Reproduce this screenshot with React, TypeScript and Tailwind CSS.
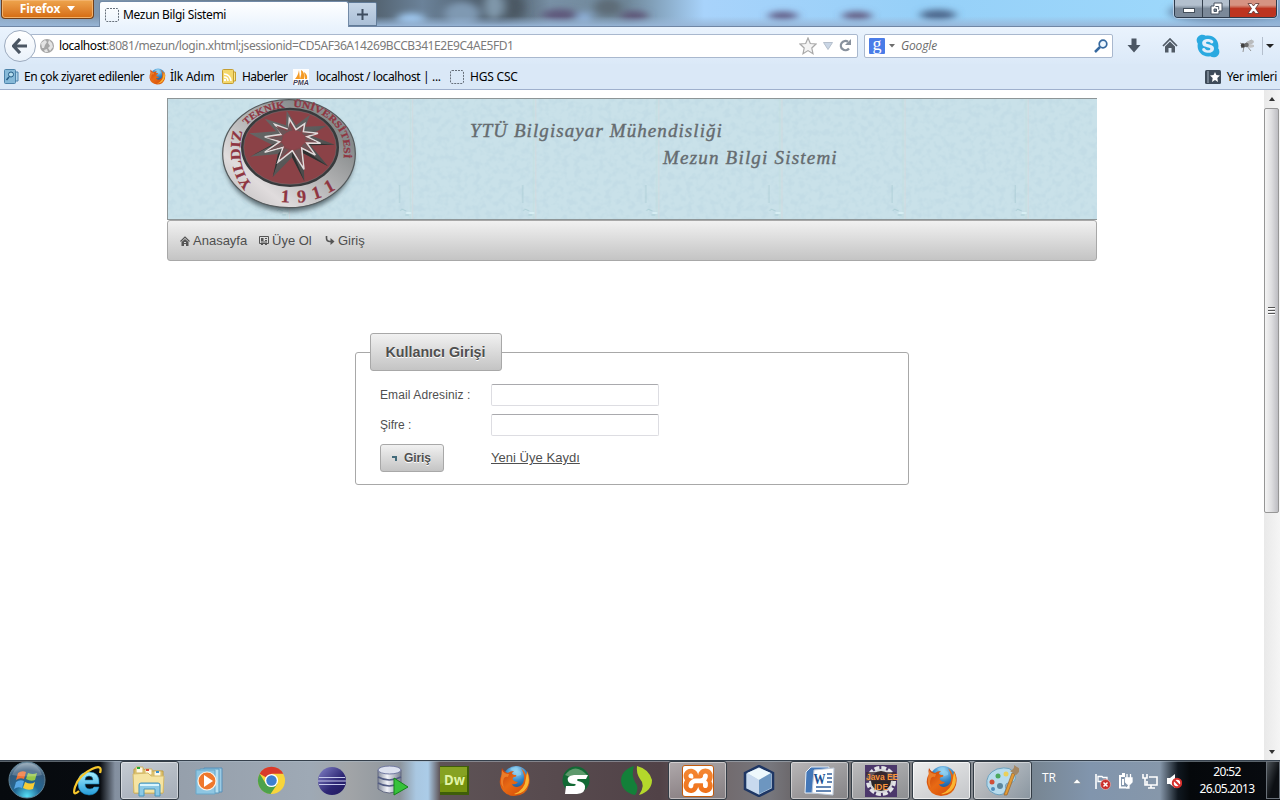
import React from "react";
import { FaSkype } from "react-icons/fa";
import { SiXampp } from "react-icons/si";

const ui = "font-['Noto_Sans','Open_Sans',sans-serif]";

function Firefox({ size, id }: { size: number; id: string }) {
  return (
    <svg width={size} height={size} viewBox="0 0 32 32" className="shrink-0">
      <defs>
        <radialGradient id={id + "b"} cx=".5" cy=".2" r=".8">
          <stop offset="0" stopColor="#a6dcf8" />
          <stop offset=".5" stopColor="#2f83c5" />
          <stop offset="1" stopColor="#123a7c" />
        </radialGradient>
        <linearGradient id={id + "o"} x1="0" y1="0" x2="1" y2="1">
          <stop offset="0" stopColor="#c03a0b" />
          <stop offset=".45" stopColor="#e86a14" />
          <stop offset=".8" stopColor="#d9520a" />
          <stop offset="1" stopColor="#ffc02e" />
        </linearGradient>
      </defs>
      <circle cx="17" cy="14" r="13" fill={`url(#${id}b)`} />
      <path d="M11 4q4-3 9-1q-3 1-1 3q4 0 3 4l-4 1-2-4z" fill="#8fd0f0" opacity=".7" />
      <path
        d="M3 3Q2 6 3 9Q0 14 1 19Q3 30 15 31Q27 31 30 20Q32 12 28 6Q28 9 27 10Q25 5 22 3Q26 10 25 15Q24 21 18 22Q14 22 13 19Q17 20 19 17Q16 17 14 15Q13 13 15 12Q18 12 17 10Q13 10 13 8L15 6Q11 6 9 8Q5 7 3 3Z"
        fill={`url(#${id}o)`}
      />
      <path d="M28 7Q33 18 25 26Q20 30 15 29Q26 25 27 13Z" fill="#ffc63a" opacity=".85" />
      <path d="M3 5Q5 9 10 9L9 12Q7 11 5 13Q3 18 5 23Q1 19 2 14Z" fill="#f48b31" opacity=".75" />
    </svg>
  );
}

function BlankPage() {
  return (
    <svg width="14" height="14" viewBox="0 0 14 14" className="shrink-0">
      <rect x=".5" y=".5" width="13" height="13" rx="1.5" fill="none" stroke="#67707b" strokeDasharray="2 1" />
    </svg>
  );
}

function TitleBar() {
  return (
    <div className="relative flex h-[27px] shrink-0 items-start overflow-hidden bg-[#9ed2f8]">
      <svg className="absolute inset-0" width="1280" height="27">
        <defs>
          <linearGradient id="sky">
            <stop offset="0" stopColor="#8fa9c4" />
            <stop offset=".29" stopColor="#52616e" />
            <stop offset=".33" stopColor="#6b8299" />
            <stop offset=".39" stopColor="#46535f" />
            <stop offset=".43" stopColor="#7890a5" />
            <stop offset=".49" stopColor="#6f8799" />
            <stop offset=".55" stopColor="#a8d3fb" />
            <stop offset=".72" stopColor="#96d0f8" />
            <stop offset=".93" stopColor="#9dd8fb" />
            <stop offset="1" stopColor="#83a9cf" />
          </linearGradient>
          <linearGradient id="haze" x2="0" y2="1">
            <stop offset=".6" stopColor="#9ab9da" stopOpacity="0" />
            <stop offset=".98" stopColor="#98b6d8" />
          </linearGradient>
          <filter id="soft" x="-50%" y="-100%" width="200%" height="300%">
            <feGaussianBlur stdDeviation="5 3" />
          </filter>
        </defs>
        <rect width="1280" height="27" fill="url(#sky)" />
        <g filter="url(#soft)">
          <ellipse cx="411" cy="19" rx="14" ry="6" fill="#9dc6ee" />
          <ellipse cx="462" cy="14" rx="18" ry="12" fill="#7f99b2" />
          <ellipse cx="494" cy="6" rx="10" ry="14" fill="#8098ab" />
          <ellipse cx="514" cy="7" rx="10" ry="12" fill="#4b5863" />
          <ellipse cx="560" cy="15" rx="18" ry="6" fill="#5f587b" />
          <ellipse cx="584" cy="18" rx="8" ry="6" fill="#8eb0d8" />
          <ellipse cx="608" cy="7" rx="14" ry="9" fill="#5d6c77" />
          <ellipse cx="634" cy="16" rx="14" ry="5" fill="#5f5678" />
          <ellipse cx="783" cy="16" rx="15" ry="4.500" fill="#625d86" />
          <ellipse cx="857" cy="16" rx="15" ry="4.500" fill="#635c81" />
          <ellipse cx="938" cy="15" rx="18" ry="5.500" fill="#4d678c" />
          <ellipse cx="1224" cy="12" rx="55" ry="13" fill="#6b8bad" />
        </g>
        <rect width="1280" height="27" fill="url(#haze)" />
        <path d="M0 26.5H1280" stroke="#6f86a5" />
      </svg>
      <div className="relative ml-[1px] flex h-[19px] w-[93px] items-start justify-center gap-[7px] rounded-b-[4px] border border-t-0 border-[#71401c] bg-gradient-to-b from-[#eea54d] to-[#d56b0d] text-[12px] font-bold leading-[17px] text-white shadow-[inset_0_0_0_1px_#f3b36c]">
        <span className="font-['Open_Sans'] text-[12px] tracking-[-0.2px]">Firefox</span>
        <svg width="8" height="5" className="mt-[6px]"><path d="M0 0H8L4 5Z" fill="#fff" /></svg>
      </div>
      <div className="relative ml-[5px] mt-[1px] flex h-[26px] w-[250px] items-center gap-[4px] rounded-t-[3px] border border-b-0 border-[#728aa7] bg-gradient-to-b from-white to-[#eaf3fd] pl-[5px]">
        <BlankPage />
        <span className="text-[12px] tracking-[-0.34px]">Mezun Bilgi Sistemi</span>
      </div>
      <div className="relative mt-[2px] flex h-[24px] w-[28px] items-center justify-center rounded-tr-[2px] border border-l-0 border-[#617b98] bg-gradient-to-b from-[#c6d5e6] to-[#aabfd7]">
        <svg width="11" height="11" viewBox="0 0 11 11"><path d="M5.5 0V11M0 5.5H11" stroke="#3e4d60" strokeWidth="2" /></svg>
      </div>
      <div className="relative ml-auto mr-[3px] flex h-[18px] w-[103px] overflow-hidden rounded-b-[4px] border border-t-0 border-[#2d3b4c] shadow-[0_0_0_1px_#b9d0e7]">
        <div className="flex w-[28px] items-center justify-center border-r border-[#34404e] bg-gradient-to-b from-[#b3c0ce] from-30% to-[#7b8999] to-50%">
          <svg width="12" height="5" className="mt-[4px]"><rect x=".5" y=".5" width="11" height="4" fill="#fff" stroke="#444f5b" /></svg>
        </div>
        <div className="flex w-[27px] items-center justify-center border-r border-[#34404e] bg-gradient-to-b from-[#b3c0ce] from-30% to-[#7b8999] to-50%">
          <svg width="13" height="13" viewBox="0 0 13 13">
            <path fillRule="evenodd" d="M4 1H12V9H9V12H1V4H4ZM4 7H6.500V9.500H4Z" fill="#fff" stroke="#485360" />
            <path d="M5.500 4.500H8.700V7.500" fill="none" stroke="#485360" />
          </svg>
        </div>
        <div className="flex flex-1 items-center justify-center bg-gradient-to-b from-[#d69382] from-30% to-[#bd3420] to-50%">
          <svg width="13" height="11" viewBox="0 0 13 11">
            <path d="M1 .5H4.5L6.5 3L8.5 .5H12L8.5 5.5L12 10.5H8.5L6.5 8L4.500 10.5H1L4.500 5.500Z" fill="#fff" stroke="#5c3330" strokeWidth=".8" />
          </svg>
        </div>
      </div>
    </div>
  );
}

function NavBar() {
  return (
    <div className="flex h-[37px] shrink-0 items-center bg-gradient-to-b from-[#eaf3fd] to-[#dbe9f8]">
      <div className="z-10 ml-[4px] flex h-[32px] w-[32px] shrink-0 items-center justify-center rounded-full border border-[#9dabbf] bg-gradient-to-b from-white to-[#e9f1fa]">
        <svg width="16" height="16" viewBox="0 0 16 16"><path d="M8 1L1.500 8L8 15M2.500 8H15" stroke="#4b5663" strokeWidth="3.200" fill="none" /></svg>
      </div>
      <div className="-ml-[6px] flex h-[24px] w-[828px] items-center rounded-[2px] border border-[#a9b8ce] bg-white pl-[9px]">
        <svg width="14" height="14" viewBox="0 0 14 14" className="shrink-0">
          <circle cx="7" cy="7" r="7" fill="#a5a5a5" />
          <path d="M1 4L5 1L7 3L5 6L4 9L2 9ZM9 1L12 4L13 8L10 12L8 9L10 7L8 4ZM4 11L7 10L8 13L5 13Z" fill="#e3e3e3" />
        </svg>
        <span className="ml-[5px] whitespace-nowrap text-[12px] tracking-[-0.42px] text-[#7b7b7b]"><span className="text-black">localhost</span>:8081/mezun/login.xhtml;jsessionid=CD5AF36A14269BCCB341E2E9C4AE5FD1</span>
        <svg width="18" height="18" viewBox="0 0 18 18" className="ml-auto">
          <path d="M9 1L11.300 6.500L17 7L12.800 11L14 16.700L9 13.600L4 16.700L5.200 11L1 7L6.700 6.500Z" fill="#f4f4f4" stroke="#a9a9a9" strokeWidth="1.200" />
        </svg>
        <svg width="10" height="8" className="ml-[6px]"><path d="M.5 .5H9.500L5 7.500Z" fill="#cad6e5" stroke="#b5bfcc" /></svg>
        <svg width="13" height="13" viewBox="0 0 13 13" className="ml-[6px] mr-[5px]">
          <path d="M10 9.500A4.600 4.600 0 1 1 9 2.700" fill="none" stroke="#88919d" strokeWidth="2.300" />
          <path d="M12 0V6H6Z" fill="#88919d" />
        </svg>
      </div>
      <div className="ml-[6px] flex h-[24px] w-[249px] items-center rounded-[2px] border border-[#a9b8ce] bg-white pl-[4px]">
        <div className="flex h-[16px] w-[16px] items-center justify-center rounded-[1px] bg-[#4a7ce8] pb-[4px] font-['Liberation_Serif'] text-[18px] leading-none text-white">g</div>
        <svg width="6" height="4" className="ml-[4px]"><path d="M0 0H6L3 3.500Z" fill="#6d6d6d" /></svg>
        <span className="ml-[6px] font-['Open_Sans'] text-[12px] italic tracking-[-0.15px] text-[#6c6c6c]">Google</span>
        <svg width="14" height="14" viewBox="0 0 14 14" className="ml-auto mr-[4px]">
          <circle cx="9" cy="5" r="3.800" fill="#eef7ff" stroke="#36699f" strokeWidth="1.700" />
          <path d="M6 8L1 13" stroke="#36699f" strokeWidth="2.500" />
        </svg>
      </div>
      <svg width="14" height="15" viewBox="0 0 14 15" className="ml-[14px]"><path d="M4.500 .5H9.500V7H13.500L7 14.500L.5 7H4.500Z" fill="#4c5764" /></svg>
      <svg width="16" height="15" viewBox="0 0 16 15" className="ml-[21px]">
        <path d="M1 8L8 1L15 8" fill="none" stroke="#505a65" strokeWidth="1.700" />
        <path d="M3 8.500L8 3.500L13 8.500V14.500H9.500V10H6.500V14.500H3Z" fill="#505a65" />
      </svg>
      <FaSkype size={26} color="#2aa9e0" className="ml-[17px]" />
      <svg width="17" height="14" viewBox="0 0 17 14" className="ml-[17px]">
        <path d="M2 4L7 6L3 9M6 7L5 13M9 7L13 12M8 4L14 1M10 6L16 7" stroke="#8a8a8a" fill="none" strokeWidth=".9" />
        <ellipse cx="12" cy="3.500" rx="4" ry="2" fill="#b9bbbd" transform="rotate(-18 12 3.500)" />
        <ellipse cx="12.500" cy="7" rx="3.500" ry="1.700" fill="#c2c3c4" />
        <circle cx="5" cy="6.500" r="2.200" fill="#3f3f3f" /><circle cx="8.500" cy="6" r="2.300" fill="#6a6a6a" />
      </svg>
      <div className="ml-[7px] h-[18px] w-px bg-[#b4bfcd]" />
      <svg width="8" height="4" className="ml-[3px]"><path d="M0 0H8L4 4Z" fill="#222" /></svg>
    </div>
  );
}

function Bookmarks() {
  return (
    <div className="flex h-[26px] shrink-0 items-center border-b border-[#9fb0cd] bg-[#dae8f7] text-[12px]">
      <svg width="15" height="15" viewBox="0 0 15 15" className="ml-[4px]">
        <path d="M11 3H14V12H11" fill="#afd4ea" stroke="#4c83ac" />
        <rect x=".5" y=".5" width="11" height="14" rx="1" fill="#86b9d8" stroke="#4d83aa" />
        <circle cx="7" cy="5.500" r="2.500" fill="#b7deef" stroke="#245b85" /><path d="M5 8L2.500 11" stroke="#245b85" strokeWidth="1.500" />
      </svg>
      <span className="ml-[5px] w-[121px] whitespace-nowrap tracking-[-0.4px]">En çok ziyaret edilenler</span>
      <span className="ml-[4px]"><Firefox size={17} id="fs" /></span>
      <span className="ml-[4px] w-[45px] whitespace-nowrap tracking-[-0.200px]">İlk Adım</span>
      <svg width="14" height="15" viewBox="0 0 14 15" className="ml-[7px]">
        <path d="M11 3H13.500V12H11" fill="#f9e890" stroke="#c69f2e" /><rect x=".5" y=".5" width="11" height="14" rx="1" fill="#f4d86c" stroke="#c49d33" />
        <path d="M2 5Q8 5 9 12M2 8Q6 8 6 12" fill="none" stroke="#fff" strokeWidth="1.500" /><circle cx="3" cy="11" r="1.200" fill="#fff" />
      </svg>
      <span className="ml-[6px] w-[46px] whitespace-nowrap tracking-[-0.520px]">Haberler</span>
      <svg width="16" height="16" viewBox="0 0 16 16" className="ml-[5px]">
        <rect width="16" height="16" fill="#fff" />
        <path d="M2 10Q5 7 6 1L7 10ZM7 10Q9 5 8 1Q12 3 11 10ZM12 10L11 3Q15 6 14 10Z" fill="#f49b25" />
        <text x="0" y="15.500" fontFamily="Liberation Sans" fontSize="6.500" fontWeight="bold" fontStyle="italic" textLength="16" lengthAdjust="spacingAndGlyphs" fill="#3e3e58">PMA</text>
      </svg>
      <span className="ml-[7px] w-[126px] whitespace-nowrap tracking-[-0.370px]">localhost / localhost | ...</span>
      <span className="ml-[8px]"><BlankPage /></span>
      <span className="ml-[6px] whitespace-nowrap tracking-[-0.200px]">HGS CSC</span>
      <svg width="16" height="14" viewBox="0 0 16 14" className="ml-auto">
        <rect width="16" height="14" rx="1.500" fill="#3e4b59" /><path d="M3 1V13" stroke="#73808e" strokeWidth="2" />
        <path d="M10 2L11.400 5L15 5.500L12.300 8L13 12L10 10L7 12L7.700 8L5 5.500L8.600 5Z" fill="#fff" />
      </svg>
      <span className="ml-[6px] mr-[3px] whitespace-nowrap tracking-[-0.300px]">Yer imleri</span>
    </div>
  );
}

function Seal() {
  return (
    <svg width="140" height="120" viewBox="180 21 420 360" className="ml-[52px] shrink-0">
      <defs>
        <linearGradient id="ring" x1="0" y1="1" x2="1" y2="0">
          <stop offset="0" stopColor="#b5b3b4" /><stop offset=".25" stopColor="#e0dcdd" />
          <stop offset=".5" stopColor="#b4b4b5" /><stop offset=".78" stopColor="#85898a" /><stop offset="1" stopColor="#a2a4a6" />
        </linearGradient>
        <linearGradient id="dark" x1="0" y1="0" x2="1" y2="1"><stop offset="0" stopColor="#6a6a6a" /><stop offset=".5" stopColor="#5c5c5c" /><stop offset="1" stopColor="#3c3c3c" /></linearGradient>
        <filter id="sealShadow" x="-20%" y="-20%" width="140%" height="150%"><feGaussianBlur stdDeviation="8" /></filter>
        <path id="arcA" d="M278 280C238 238 234 170 248 115" />
        <path id="arcB" d="M259 100C286 71 330 51 378 47" />
        <path id="arcC" d="M400 45C475 47 530 90 547 138C553 160 553 190 549 216" />
      </defs>
      <ellipse cx="387" cy="199" rx="194" ry="160" fill="#3d4b51" opacity=".8" filter="url(#sealShadow)" />
      <ellipse cx="387" cy="185" rx="199" ry="162" fill="url(#ring)" stroke="#555a5c" strokeWidth="3.500" />
      <ellipse cx="390" cy="166" rx="143" ry="115" fill="#8b4247" stroke="#383a3c" strokeWidth="8" />
      <ellipse cx="390" cy="166" rx="139" ry="111" fill="none" stroke="#727577" strokeWidth="1.500" />
      <polygon points="380,56 408,100 450,68 436,104 500,101 450,130 525,158 452,160 504,223 430,184 433,268 396,196 338,256 354,186 270,194 336,158 268,124 348,118 314,80 378,100" fill="url(#dark)" />
      <path d="M525 158L452 160L440 152ZM504 223L430 184L425 168ZM433 268L396 196L397 176ZM338 256L354 186L369 166ZM270 194L336 158L359 149Z" fill="#2f2f2f" />
      <polygon points="388,80 408,113 434,95 430,119 474,124 441,134 482,154 440,153 466,189 425,168 432,232 397,176 354,210 369,166 314,181 359,149 314,134 365,127 344,97 386,112" fill="#84464b" stroke="#e0dbdb" strokeWidth="4.500" strokeLinejoin="miter" />
      <path d="M388 92L398 122L380 124ZM343 102L382 118L370 133ZM318 137L368 132L366 146ZM320 178L364 152L372 162ZM358 202L372 168L386 174ZM428 220L402 176L420 170ZM460 184L424 163L434 153ZM472 151L436 147L436 136ZM466 126L434 131L426 122ZM430 101L422 120L408 118Z" fill="#6c5557" />
      <polygon points="390,116 416,117 433,131 437,149 420,166 399,174 377,165 366,149 371,128" fill="#8e454c" />
      <g fontFamily="Liberation Serif" fontWeight="bold" fill="#8f3541" stroke="#8f3541" strokeWidth=".7">
        <text fontSize="43"><textPath href="#arcA" textLength="172" lengthAdjust="spacingAndGlyphs">YILDIZ</textPath></text>
        <text fontSize="29"><textPath href="#arcB" textLength="130" lengthAdjust="spacingAndGlyphs">TEKNİK</textPath></text>
        <text fontSize="29"><textPath href="#arcC" textLength="245" lengthAdjust="spacingAndGlyphs">ÜNİVERSİTESİ</textPath></text>
        <g fontSize="54" textAnchor="middle">
          <text transform="translate(375 331) rotate(4)">1</text>
          <text transform="translate(427 331) rotate(-6)">9</text>
          <text transform="translate(475 319) rotate(-18)">1</text>
          <text transform="translate(516 298) rotate(-28)">1</text>
        </g>
      </g>
    </svg>
  );
}

function Banner() {
  return (
    <div className="relative flex h-[122px] overflow-hidden border border-r-0 border-[#8d9597] bg-[#c9e1e9]">
      <svg className="absolute inset-0" width="930" height="120">
        <defs>
          <filter id="grain" x="0" y="0" width="100%" height="100%" colorInterpolationFilters="sRGB">
            <feTurbulence type="fractalNoise" baseFrequency=".16" numOctaves="2" seed="8" />
            <feColorMatrix values="0 0 0 0 .62  0 0 0 0 .76  0 0 0 0 .83  4 0 0 0 -1.75" />
          </filter>
          <pattern id="tile" width="123.100" height="120" patternUnits="userSpaceOnUse" x="-1">
            <path d="M122.500 0V120" stroke="#d6d8da" strokeWidth="1" opacity=".8" />
            <path d="M120.500 0V120" stroke="#c2dedb" strokeWidth="1.500" opacity=".5" />
            <path d="M109.500 86V104M110 112L112 110L116 112M115 116H119" stroke="#9cc3cc" fill="none" opacity=".6" />
            <path d="M116 114H121" stroke="#dcf3f7" strokeWidth="1.500" />
          </pattern>
        </defs>
        <rect width="930" height="120" filter="url(#grain)" opacity=".13" />
        <rect width="930" height="120" fill="url(#tile)" />
      </svg>
      <div className="relative flex"><Seal /></div>
      <div className="relative ml-[110px] mt-[18px] flex flex-col whitespace-nowrap font-['Liberation_Serif'] text-[19px] italic leading-[27px] tracking-[1.080px] text-[#656b6f] [-webkit-text-stroke:0.400px_#656b6f]">
        <span>YTÜ Bilgisayar Mühendisliği</span>
        <span className="pl-[193px] tracking-[1.200px]">Mezun Bilgi Sistemi</span>
      </div>
    </div>
  );
}

function Menu() {
  return (
    <div className="flex h-[41px] items-center rounded-[3px] border border-[#a8a8a8] bg-gradient-to-b from-[#f1f1f1] to-[#c4c4c4] pl-[12px] text-[13px] text-[#4f4f4f]">
      <svg width="10" height="10" viewBox="0 0 10 10"><path d="M.5 5.500L5 1L9.500 5.500" stroke="#555" strokeWidth="1.200" fill="none" /><path fillRule="evenodd" d="M1.500 6L5 3L8.500 6V10H1.500ZM4 6V7H6V6ZM4 8V10H6V8Z" fill="#555" /></svg>
      <span className="ml-[3px] w-[54px]">Anasayfa</span>
      <svg width="10" height="9" viewBox="0 0 10 9" className="ml-[12px]"><path d="M.5 .5H9.500V7.500H.5ZM2 8.500H4M6 8.500H8M6 2.500H8M6 4.500H8M2 6H8" stroke="#555" fill="none" /><rect x="2" y="2" width="2.500" height="3" fill="#555" /></svg>
      <span className="ml-[3px] w-[41px] whitespace-nowrap">Üye Ol</span>
      <svg width="10" height="9" viewBox="0 0 10 9" className="ml-[12px]"><path d="M1.500 0V2Q1.500 5.500 5 5.500H7" stroke="#555" strokeWidth="1.600" fill="none" /><path d="M5.500 2V9L9.500 5.500Z" fill="#555" /></svg>
      <span className="ml-[3px]">Giriş</span>
    </div>
  );
}

function Login() {
  return (
    <div className="ml-[188px] mt-[91px] h-[133px] w-[554px] rounded-[3px] border border-[#a8a8a8] text-[12px] text-[#4f4f4f]">
      <div className="-mt-[20px] ml-[14px] flex h-[38px] w-[132px] items-center justify-center rounded-[3px] border border-[#a8a8a8] bg-gradient-to-b from-[#f1f1f1] to-[#c4c4c4] pr-[1px] pt-[2px] text-[14.300px] font-bold [text-shadow:0_1px_0_#fff]">Kullanıcı Girişi</div>
      <div className="ml-[24px] mt-[13px] grid grid-cols-[111px_168px] items-center gap-y-[8px]">
        <label htmlFor="email" className="whitespace-nowrap tracking-[0.100px]">Email Adresiniz :</label>
        <input id="email" className="h-[22px] w-[168px] rounded-[2px] border border-[#dddde2] border-t-[#a9a9ad] bg-white px-1 outline-none" />
        <label htmlFor="pass">Şifre :</label>
        <input id="pass" type="password" className="h-[22px] w-[168px] rounded-[2px] border border-[#dddde2] border-t-[#a9a9ad] bg-white px-1 outline-none" />
        <button className="flex h-[28px] w-[64px] items-center rounded-[3px] border border-[#a8a8a8] bg-gradient-to-b from-[#f1f1f1] to-[#c4c4c4] pl-[11px] font-bold [text-shadow:0_1px_0_#fff]">
          <svg width="5" height="5"><path d="M0 1H4V5" stroke="#426b7b" strokeWidth="2" fill="none" /></svg>
          <span className="ml-[7px] tracking-[-0.100px]">Giriş</span>
        </button>
        <a className="whitespace-nowrap text-[13px] tracking-[0.030px] underline" href="#kayit">Yeni Üye Kaydı</a>
      </div>
    </div>
  );
}

function ScrollBar() {
  return (
    <div className="flex w-[16px] shrink-0 flex-col items-center bg-gradient-to-r from-[#e9e9e9] to-[#f5f5f5]">
      <div className="flex h-[18px] items-center"><svg width="6" height="4"><path d="M0 4L3 0L6 4Z" fill="#333" /></svg></div>
      <div className="mr-[1px] flex h-[405px] w-[15px] flex-col items-center justify-center gap-[1px] rounded-[2px] border border-[#969696] bg-gradient-to-r from-[#f4f4f4] via-[#dedee0] to-[#bdbdc2]">
        {[0, 1, 2].map((n) => <div key={n} className="h-[2px] w-[7px] border-t border-[#555] bg-white" />)}
      </div>
      <div className="mt-auto flex h-[17px] items-center"><svg width="6" height="4"><path d="M0 0H6L3 4Z" fill="#333" /></svg></div>
    </div>
  );
}

const icons: { open: boolean; active?: boolean; art: React.ReactNode }[] = [
  { open: false, art: (
    <svg width="32" height="32" viewBox="0 0 32 32">
      <defs><linearGradient id="ie" x2="0" y2="1"><stop stopColor="#a8efff" /><stop offset="1" stopColor="#249bd9" /></linearGradient></defs>
      <path d="M27 19H13Q13 24 18 24Q21 24 22 22H27Q25 30 17 30Q6 29 6 18Q6 7 17 7Q28 7 27 19ZM13 15H21Q21 11 17 11Q13 11 13 15Z" fill="url(#ie)" stroke="#1683b9" strokeWidth=".6" />
      <path d="M7 26Q0 32 3 22Q7 10 20 4Q31-1 28 8" fill="none" stroke="#f7c72c" strokeWidth="2.300" />
    </svg>) },
  { open: true, art: (
    <svg width="34" height="32" viewBox="0 0 34 32">
      <path d="M2 4H12L14 6H31V28H2Z" fill="#e6ce7b" stroke="#bb983e" /><path d="M4 2H11V8H4ZM13 4H20V10H13ZM22 6H29V12H22Z" fill="#fff9e5" stroke="#d1b35c" />
      <path d="M5 2H8V4H5Z" fill="#26a833" /><path d="M14 4H17V6H14Z" fill="#d64c34" /><path d="M24 6H27V8H24Z" fill="#3a91cd" />
      <path d="M1 9L16 8L19 11H32L31 28H2Z" fill="#f5e4a2" stroke="#d5ba69" />
      <path d="M7 31V20Q7 18 9 18H26Q28 18 28 20V31H23V24H12V31Z" fill="#8bc9e5" stroke="#4695bd" /><path d="M8 20H27" stroke="#d9f5fd" strokeWidth="2" />
    </svg>) },
  { open: false, art: (
    <svg width="32" height="28" viewBox="0 0 32 28">
      <path d="M10 1H28V25H10Z" fill="#9ccbe4" stroke="#568fb9" /><path d="M6 2H25V26H6Z" fill="#b8e0f0" stroke="#5999c0" /><path d="M2 3H21V27H2Z" fill="#8ec6e2" stroke="#68a6c8" />
      <circle cx="13" cy="14" r="9" fill="#ef782c" stroke="#fff2e4" strokeWidth="1.200" /><path d="M10 8L19 14L10 20Z" fill="#fff" />
    </svg>) },
  { open: false, art: (
    <svg width="29" height="29" viewBox="0 0 30 30">
      <circle cx="15" cy="15" r="14" fill="#f8d53b" /><path d="M15 15L2.800 8A14 14 0 0 1 27.200 8H15Z" fill="#d93a2c" /><path d="M2.800 8A14 14 0 0 0 14 29L21 18.500L15 15L9 18Z" fill="#4da24b" />
      <circle cx="15" cy="15" r="6.800" fill="#fff" /><circle cx="15" cy="15" r="5.400" fill="#3e80cf" />
    </svg>) },
  { open: false, art: (
    <svg width="30" height="30" viewBox="0 0 30 30">
      <defs><linearGradient id="ec" x1="0" y1="0" x2="1" y2="1"><stop stopColor="#8484c9" /><stop offset=".6" stopColor="#2d2674" /><stop offset="1" stopColor="#1f185e" /></linearGradient></defs>
      <circle cx="15" cy="15" r="14" fill="url(#ec)" /><path d="M2 11.500H28M1 15H29M2 18.500H28" stroke="#c5c8ea" strokeWidth="1.200" />
    </svg>) },
  { open: false, art: (
    <svg width="32" height="31" viewBox="0 0 32 31">
      <defs><linearGradient id="db"><stop stopColor="#858c9c" /><stop offset=".4" stopColor="#f2f4fa" /><stop offset="1" stopColor="#767d90" /></linearGradient></defs>
      <path d="M1 5V24Q12 32 24 24V5Z" fill="url(#db)" stroke="#626982" /><ellipse cx="12.500" cy="5" rx="11.500" ry="4" fill="#dbe0ee" stroke="#7078a0" />
      <path d="M1 12Q12 18 24 12M1 18Q12 24 24 18" fill="none" stroke="#515b83" strokeWidth="1.500" /><path d="M17 13L31 22L17 30Z" fill="#36c23a" stroke="#16811b" />
    </svg>) },
  { open: false, art: (
    <svg width="29" height="29" viewBox="0 0 29 29"><rect width="29" height="29" fill="#3f5e0a" /><rect y="1" width="27" height="25" fill="#76930f" /><path d="M0 1H27V9L0 18Z" fill="#86a222" />
      <text x="4" y="19" fontFamily="Open Sans" fontSize="15" fontWeight="bold" textLength="21" lengthAdjust="spacingAndGlyphs" fill="#e2f5a8">Dw</text></svg>) },
  { open: false, art: <Firefox size={32} id="f1" /> },
  { open: false, art: (
    <svg width="28" height="29" viewBox="0 0 28 29"><circle cx="14" cy="14" r="13.500" fill="#126934" /><path d="M3 9Q13-4 25 9Q15 15 3 9Z" fill="#7fae85" opacity=".7" />
      <path d="M26 9H12Q4 10 6 15Q7 18 13 18Q15 19 12 20H4L3 28H15Q24 27 23 20Q22 16 16 15Q14 14 16 13H24Z" fill="#fff" /></svg>) },
  { open: false, art: (
    <svg width="32" height="31" viewBox="0 0 32 31"><path d="M13 1Q0 5 0 16Q1 27 14 30Q19 23 14 17Q10 10 13 1Z" fill="#138039" /><path d="M16 1Q28 4 31 15Q31 26 18 30Q25 20 19 14Q15 8 16 1Z" fill="#b4d82b" /></svg>) },
  { open: true, art: (
    <div className="flex h-[32px] w-[32px] items-center justify-center overflow-hidden rounded-[3px] border border-[#c35a0b] bg-gradient-to-b from-[#f58a35] to-[#ee6e15]">
      <SiXampp size={40} color="#fff" className="shrink-0" />
    </div>) },
  { open: false, art: (
    <svg width="32" height="32" viewBox="0 0 32 32"><path d="M16 1L30 8V24L16 31L2 24V8Z" fill="#bfd5e7" stroke="#1e3664" strokeWidth="2.500" /><path d="M16 3L28 8L16 15L4 8Z" fill="#eef8fc" /><path d="M16 15L28 8V23L16 29Z" fill="#6d96c0" /><path d="M4 8L16 15V29L4 23Z" fill="#c8d9ee" /></svg>) },
  { open: true, art: (
    <svg width="31" height="30" viewBox="0 0 31 30"><path d="M7 1H25L24 27H1L2 6Z" fill="#4377b8" stroke="#e7f0fa" /><path d="M10 4L30 2L29 29L8 27Z" fill="#fff" stroke="#bbc8d9" /><text x="9.500" y="18" fontFamily="Liberation Serif" fontSize="14" fontWeight="bold" textLength="12" lengthAdjust="spacingAndGlyphs" fill="#214f91">W</text><path d="M23 8H28M23 12H28M23 16H28M12 21H27M12 25H27" stroke="#315f9c" strokeWidth="1.500" /></svg>) },
  { open: true, art: (
    <svg width="44" height="36" viewBox="-4 -2 44 36" className="overflow-visible"><rect x="2" width="32" height="32" fill="#4c386b" /><circle cx="18" cy="16" r="13" fill="none" stroke="#e3e4e7" strokeWidth="4" strokeDasharray="4.800 2" /><circle cx="18" cy="16" r="11" fill="#2b2628" stroke="#d4d5d8" strokeWidth="2" />
      <rect x="3" y="7" width="30" height="9" fill="#3b2932" opacity=".75" />
      <g fill="#f7943c" fontFamily="Liberation Sans" fontWeight="bold"><text x="3" y="14.500" fontSize="8.400">Java EE</text><text x="11" y="24.500" fontSize="8.400">IDE</text></g></svg>) },
  { open: true, active: true, art: <Firefox size={32} id="f2" /> },
  { open: true, art: (
    <svg width="33" height="32" viewBox="0 0 33 32"><path d="M1 21Q-1 9 11 4Q26 0 29 10Q31 17 23 18Q18 18 20 24Q18 32 9 29Q3 27 1 21Z" fill="#b7dbed" stroke="#6ba1bf" /><circle cx="6" cy="17" r="2.500" fill="#cf503b" /><circle cx="12" cy="11" r="2.500" fill="#4aa85f" /><circle cx="20" cy="9" r="2.500" fill="#ead05b" /><circle cx="7" cy="24" r="2" fill="#4f8dbc" /><circle cx="14" cy="21" r="3" fill="#5c879d" />
      <path d="M18 30L26 8L29 9L21 30Z" fill="#e29a35" stroke="#92632c" strokeWidth=".7" /><path d="M24 6Q29 4 28 0L34 4Q33 8 30 10Z" fill="#a48764" /></svg>) },
];

function TaskBar() {
  return (
    <div className="relative flex h-[40px] shrink-0 items-center overflow-hidden bg-[linear-gradient(90deg,#060a0e_0,#080b10_100px,#8490a0_115px,#959fab_170px,#9ea9b5_310px,#a1a4a7_350px,#8d959d_400px,#a9c7e1_416px,#abcce8_428px,#5e5356_440px,#514247_660px,#71696c_720px,#77777d_770px,#6a6669_795px,#77787b_890px,#8a8f96_980px,#778591_1030px,#8195ad_1090px,#8697aa_1160px,#101820_1178px,#05080b_1190px,#080b10_1280px)] shadow-[inset_0_1px_0_#35404c,inset_0_2px_0_#adbcc780]">
      <div className="flex w-[57px] shrink-0 items-center justify-center pr-[3px]">
        <svg width="38" height="38" viewBox="0 0 38 38">
          <defs><radialGradient id="orb" cx=".5" cy=".95" r=".9"><stop stopColor="#55e0f7" /><stop offset=".4" stopColor="#226895" /><stop offset=".8" stopColor="#35597a" /><stop offset="1" stopColor="#7f97aa" /></radialGradient></defs>
          <circle cx="19" cy="19" r="18" fill="url(#orb)" stroke="#5f8296" />
          <path d="M10 12Q14 9 18 11L16 18Q12 16 8 19Z" fill="#f17232" /><path d="M20 12Q25 14 29 12L27 19Q23 21 18 18Z" fill="#96c749" /><path d="M8 21Q12 18 16 20L14 27Q10 25 6 28Z" fill="#58a7e4" /><path d="M17 21Q23 24 27 21L25 28Q20 30 15 27Z" fill="#f7cc36" />
          <path d="M4 14Q9 2 19 2Q30 2 34 14Q22 17 4 14Z" fill="#fff" opacity=".2" />
        </svg>
      </div>
      <div className="ml-[1px] flex h-full w-[974px] shrink-0">
        {icons.map((item, i) => (
          <div key={i} className="flex w-[60.950px] shrink-0 items-center justify-center pt-[1px]">
            {item.open ? (
              <div className={item.active
                ? "flex h-[39px] w-[59px] items-center justify-center rounded-[3px] border border-[#343d46] bg-gradient-to-br from-[#ffffffdd] to-[#ffffff80] shadow-[inset_0_0_0_1px_#ffffffb0]"
                : "flex h-[39px] w-[59px] items-center justify-center rounded-[3px] border border-[#343d46] bg-gradient-to-br from-[#ffffff88] to-[#ffffff22] shadow-[inset_0_0_0_1px_#ffffff70]"}>{item.art}</div>
            ) : item.art}
          </div>
        ))}
      </div>
      <span className="ml-[10px] w-[15px] pb-[4px] font-['Open_Sans'] text-[12px] text-white">TR</span>
      <svg width="8" height="5" className="ml-[16px] mt-[3px]"><path d="M0 4.500H8L4 0Z" fill="#fff" stroke="#5c6975" strokeWidth=".4" /></svg>
      <svg width="17" height="17" viewBox="0 0 17 17" className="ml-[13px] mt-[3px]"><path d="M2 1V16" stroke="#fff" strokeWidth="1.600" /><path d="M4 3.500H8L9 4.500H13V9.500H9L8 8.500H4Z" fill="none" stroke="#fff" strokeWidth="1.300" /><circle cx="11.500" cy="11.500" r="5" fill="#ca2e2b" stroke="#efadab" strokeWidth=".7" /><path d="M9.500 9.500L13.500 13.500M13.500 9.500L9.500 13.500" stroke="#fff" strokeWidth="1.500" /></svg>
      <svg width="15" height="16" viewBox="0 0 15 16" className="ml-[7px] mt-[2px]"><path d="M7 3H2V14.500H8M4 1H7" fill="none" stroke="#fff" strokeWidth="2" /><path d="M4 6H6V12H4Z" fill="#fff" /><path d="M7.500 5H14V9L12 11H9.500L7.500 9ZM9 5V1M12.500 5V1M11 11V15H8" fill="#fff" stroke="#fff" strokeWidth="1.300" /></svg>
      <svg width="16" height="16" viewBox="0 0 16 16" className="ml-[9px] mt-[2px]"><path d="M7 4H15V12H5V8M9 12V15M6 15H13M1 1V5H5V1M3 5V12H5" fill="none" stroke="#fff" strokeWidth="1.600" /></svg>
      <svg width="15" height="16" viewBox="0 0 15 16" className="ml-[9px] mt-[2px]"><path d="M0 5H3L8 1V15L3 11H0Z" fill="#fff" /><circle cx="10" cy="10" r="4.200" fill="#fff" stroke="#d7302d" strokeWidth="2" /><path d="M7 7L13 13" stroke="#d7302d" strokeWidth="2" /></svg>
      <div className="ml-auto flex w-[58px] shrink-0 flex-col items-center whitespace-nowrap text-[12px] leading-[17px] text-white">
        <span className="tracking-[-0.600px]">20:52</span><span className="tracking-[-0.620px]">26.05.2013</span>
      </div>
      <div className="ml-[10px] h-[38px] w-[14px] shrink-0 border border-[#697078] bg-gradient-to-br from-[#4e5459] to-[#0c0f13] to-60%" />
    </div>
  );
}

export default function App() {
  return (
    <div className={`${ui} flex h-[800px] w-[1280px] flex-col overflow-hidden bg-white text-black`}>
      <TitleBar />
      <NavBar />
      <Bookmarks />
      <main className="flex h-[670px] shrink-0 font-['Liberation_Sans',Arial,sans-serif]">
        <div className="flex-1">
          <div className="ml-[167px] mt-[8px] w-[930px]">
            <Banner />
            <Menu />
            <Login />
          </div>
        </div>
        <ScrollBar />
      </main>
      <TaskBar />
    </div>
  );
}
